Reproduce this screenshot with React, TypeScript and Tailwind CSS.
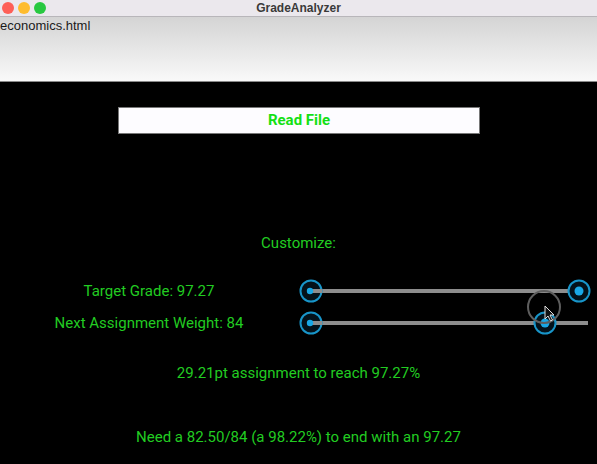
import React from 'react';

const green = 'text-[#22cc22]';

function SliderArt({ value }: { value: number }) {
  // drawn slider: track, min marker and thumb
  return (
    <svg width="299" height="32" viewBox="0 0 299 32" className="block">
      <line x1="13" y1="16" x2="290" y2="16" stroke="#8d8d8d" strokeWidth="4" />
      <circle cx="13" cy="16" r="10.5" fill="#04121a" stroke="#1895c9" strokeWidth="2" />
      <line x1="13" y1="16" x2="24" y2="16" stroke="#8d8d8d" strokeWidth="4" />
      <circle cx="12" cy="16" r="3.2" fill="#19a8e6" />
      <circle cx={value} cy="16" r="10.5" fill="#04121a" stroke="#1895c9" strokeWidth="2" />
      <circle cx={value} cy="16" r="4.5" fill="#19a8e6" />
    </svg>
  );
}

export default function App() {
  return (
    <div className="w-[597px] h-[464px] bg-black flex flex-col relative overflow-hidden" style={{ fontFamily: 'Roboto, "Liberation Sans", sans-serif' }}>
      <div className="h-[17px] bg-[#ebe8ed] border-b border-[#b8b6ba] flex items-center relative shrink-0">
        <div className="flex gap-[4px] pl-[2px]">
          <span className="w-[12px] h-[12px] rounded-full bg-[#fe5f57]" />
          <span className="w-[12px] h-[12px] rounded-full bg-[#febc2e]" />
          <span className="w-[12px] h-[12px] rounded-full bg-[#28c840]" />
        </div>
        <div className="absolute inset-0 flex items-center justify-center text-[12px] font-bold text-[#3a3a3a]" style={{ fontFamily: '"Liberation Sans", Arial, sans-serif' }}>
          GradeAnalyzer
        </div>
      </div>
      <div className="h-[65px] shrink-0 bg-gradient-to-b from-[#d4d4d4] to-[#f9f9f9] border-b border-[#8a8a8a]">
        <div className="text-[13px] leading-[16px] text-[#1a1a1a] pt-[1px]" style={{ fontFamily: '"Liberation Sans", Arial, sans-serif' }}>
          economics.html
        </div>
      </div>
      <div className="flex flex-col items-center">
        <button className="mt-[25px] w-[362px] h-[27px] bg-[#fdfcff] border border-[#777] text-[#14e014] font-bold text-[15px] ml-[1px]">
          Read File
        </button>
        <div className={`mt-[99px] h-[20px] leading-[20px] text-[15px] ${green}`}>Customize:</div>
        <div className="mt-[22px] w-full flex flex-col">
          <div className="flex h-[32px] items-center">
            <div className={`w-[298px] text-center text-[15px] ${green}`}>Target Grade: 97.27</div>
            <SliderArt value={281} />
          </div>
          <div className="flex h-[32px] items-center">
            <div className={`w-[298px] text-center text-[15px] ${green}`}>Next Assignment Weight: 84</div>
            <SliderArt value={247} />
          </div>
        </div>
        <div className={`mt-[24px] h-[20px] leading-[20px] text-[15px] ${green}`}>29.21pt assignment to reach 97.27%</div>
        <div className={`mt-[44px] h-[20px] leading-[20px] text-[15px] ${green}`}>Need a 82.50/84 (a 98.22%) to end with an 97.27</div>
      </div>
      {/* mouse cursor over slider */}
      <svg className="absolute left-[526px] top-[289px]" width="38" height="38" viewBox="0 0 38 38">
        <circle cx="18" cy="18" r="16" fill="none" stroke="#5e5e5e" strokeWidth="2" />
        <path d="M19 17 L19 30 L22 27 L24.5 32 L26.5 31 L24 26 L28 26 Z" fill="#111" stroke="#ddd" strokeWidth="1" />
      </svg>
    </div>
  );
}
